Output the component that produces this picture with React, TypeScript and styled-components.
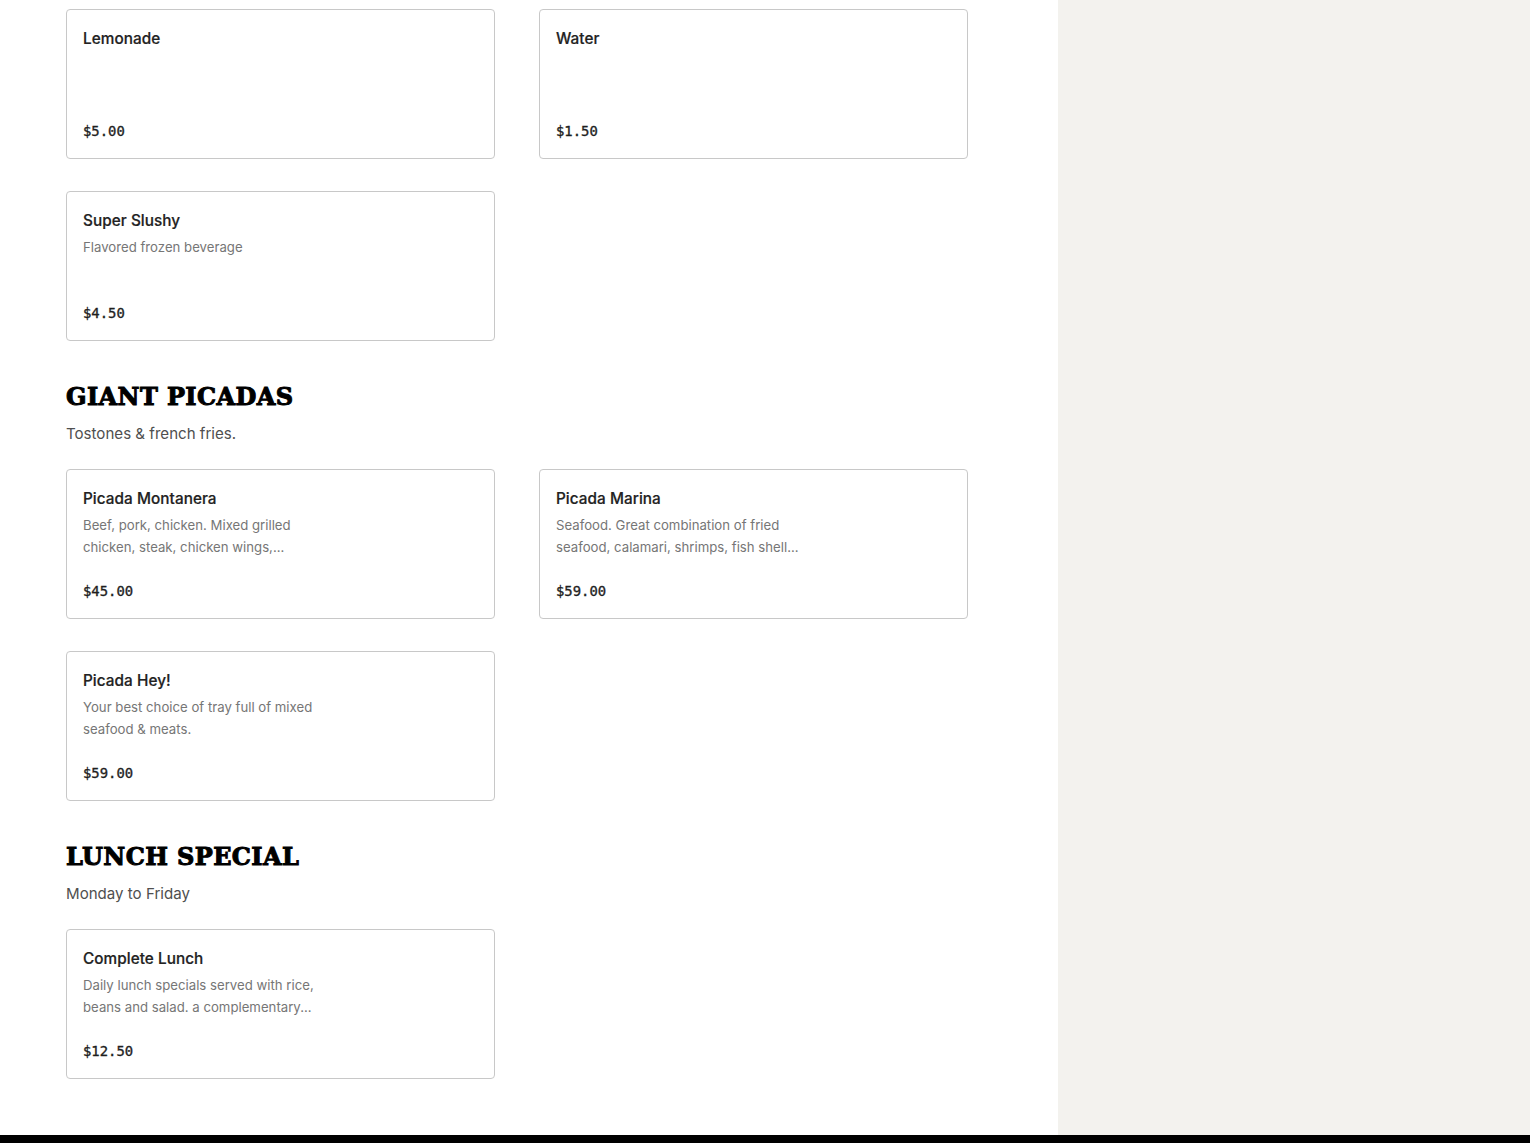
import { createGlobalStyle } from "styled-components";
import styled from "styled-components";

const GlobalStyle = createGlobalStyle`
  html, body {
    margin: 0;
    padding: 0;
    background: #fff;
    font-family: "Inter", "Liberation Sans", sans-serif;
  }
`;

const Page = styled.div`
  width: 1530px;
  height: 1143px;
  overflow: hidden;
  display: flex;
  flex-direction: column;
`;

const Columns = styled.div`
  display: flex;
  flex: 1;
  min-height: 0;
`;

const Main = styled.main`
  width: 1058px;
  box-sizing: border-box;
  padding: 9px 0 0 66px;
`;

const Aside = styled.aside`
  flex: 1;
  background: #f3f2ee;
`;

const Footer = styled.footer`
  height: 8px;
  background: #000;
`;

const Section = styled.section`
  &:not(:first-child) {
    margin-top: 42px;
  }
`;

const Heading = styled.h2`
  margin: 0;
  height: 27px;
  font-family: "DejaVu Serif", serif;
  font-weight: 700;
  font-size: 24px;
  line-height: 27px;
  letter-spacing: 0.4px;
  color: #000;
  text-transform: uppercase;
  -webkit-text-stroke: 1px #000;
`;

const Subtitle = styled.p`
  margin: 12px 0 0;
  height: 24px;
  font-size: 15.1px;
  line-height: 24px;
  color: #4f4f4f;
`;

const Grid = styled.div<{ $spaced?: boolean }>`
  display: grid;
  grid-template-columns: 429px 429px;
  column-gap: 44px;
  row-gap: 32px;
  margin-top: ${(p) => (p.$spaced ? "23px" : "0")};
`;

const Card = styled.article`
  box-sizing: border-box;
  height: 150px;
  padding: 18px 16px 17px;
  border: 1px solid #c8c8c8;
  border-radius: 4px;
  display: flex;
  flex-direction: column;
  background: #fff;
`;

const ItemName = styled.h3`
  margin: 0;
  font-size: 15.3px;
  line-height: 22px;
  font-weight: 500;
  letter-spacing: 0.06px;
  color: #222;
  -webkit-text-stroke: 0.2px #222;
`;

const ItemDesc = styled.p`
  margin: 4px 0 0;
  max-width: 262px;
  font-size: 13.2px;
  line-height: 22px;
  color: #767676;
`;

const Price = styled.span`
  margin-top: auto;
  font-family: "DejaVu Sans Mono", "Liberation Mono", monospace;
  font-size: 13.9px;
  line-height: 20px;
  font-weight: 400;
  color: #1f1f1f;
  -webkit-text-stroke: 0.35px #1f1f1f;
`;

type Item = { name: string; desc?: string; price: string };
type Group = { title?: string; subtitle?: string; items: Item[] };

const groups: Group[] = [
  {
    items: [
      { name: "Lemonade", price: "$5.00" },
      { name: "Water", price: "$1.50" },
      { name: "Super Slushy", desc: "Flavored frozen beverage", price: "$4.50" },
    ],
  },
  {
    title: "Giant Picadas",
    subtitle: "Tostones & french fries.",
    items: [
      {
        name: "Picada Montanera",
        desc: "Beef, pork, chicken. Mixed grilled chicken, steak, chicken wings,...",
        price: "$45.00",
      },
      {
        name: "Picada Marina",
        desc: "Seafood. Great combination of fried seafood, calamari, shrimps, fish shell...",
        price: "$59.00",
      },
      {
        name: "Picada Hey!",
        desc: "Your best choice of tray full of mixed seafood & meats.",
        price: "$59.00",
      },
    ],
  },
  {
    title: "Lunch Special",
    subtitle: "Monday to Friday",
    items: [
      {
        name: "Complete Lunch",
        desc: "Daily lunch specials served with rice, beans and salad. a complementary...",
        price: "$12.50",
      },
    ],
  },
];

export default function App() {
  return (
    <Page>
      <GlobalStyle />
      <Columns>
        <Main>
          {groups.map((group, i) => (
            <Section key={i}>
              {group.title && <Heading>{group.title}</Heading>}
              {group.subtitle && <Subtitle>{group.subtitle}</Subtitle>}
              <Grid $spaced={!!group.title}>
                {group.items.map((item) => (
                  <Card key={item.name}>
                    <ItemName>{item.name}</ItemName>
                    {item.desc && <ItemDesc>{item.desc}</ItemDesc>}
                    <Price>{item.price}</Price>
                  </Card>
                ))}
              </Grid>
            </Section>
          ))}
        </Main>
        <Aside />
      </Columns>
      <Footer />
    </Page>
  );
}
